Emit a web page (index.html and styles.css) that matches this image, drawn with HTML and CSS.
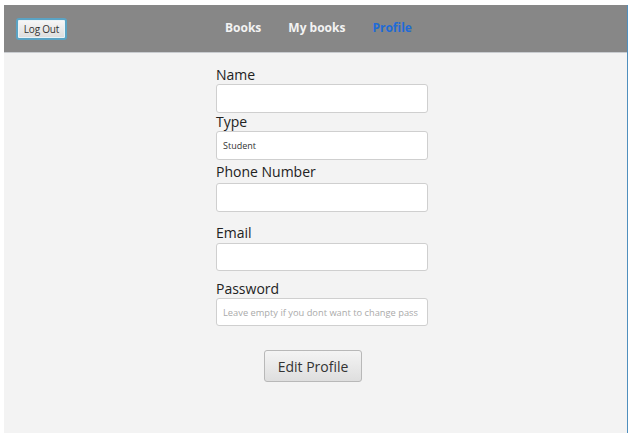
FILE: index.html
```html
<!DOCTYPE html>
<html>
<head>
<meta charset="utf-8">
<link rel="stylesheet" href="styles.css">
</head>
<body>
<div class="app">
  <header class="topbar">
    <button class="logout">Log Out</button>
    <nav class="nav">
      <span class="nav-item">Books</span>
      <span class="nav-item">My books</span>
      <span class="nav-item active">Profile</span>
    </nav>
  </header>
  <main class="content">
    <form class="form">
      <label class="label">Name</label>
      <div class="input"></div>
      <label class="label">Type</label>
      <div class="input"><span class="value">Student</span></div>
      <label class="label label-phone">Phone Number</label>
      <div class="input input-phone"></div>
      <label class="label label-email">Email</label>
      <div class="input input-email"></div>
      <label class="label label-pass">Password</label>
      <div class="input input-pass"><span class="placeholder">Leave empty if you dont want to change pass</span></div>
      <div class="actions"><button type="button" class="edit">Edit Profile</button></div>
    </form>
  </main>
</div>
</body>
</html>
```
FILE: styles.css
```css
html, body {
  margin: 0;
  padding: 0;
  background: #ffffff;
  font-family: "Open Sans", "DejaVu Sans", sans-serif;
}
.app {
  margin: 5px 0 0 4px;
  width: 623px;
  height: 428px;
  display: flex;
  flex-direction: column;
  background: #f3f3f3;
  border-right: 1px solid #4f8fbe;
}
.topbar {
  height: 47px;
  background: #878787;
  border-bottom: 1px solid #c9ccd0;
  display: flex;
  align-items: flex-start;
  box-sizing: content-box;
}
.logout {
  margin: 13px 0 0 12px;
  width: 51px;
  height: 22px;
  padding: 0;
  font-family: "Open Sans", sans-serif;
  font-size: 10px;
  letter-spacing: -0.2px;
  color: #333;
  background: linear-gradient(#f7f7f7, #dcdcdc);
  border: 2px solid #5aa3c4;
  border-radius: 3px;
  box-shadow: inset 0 0 0 1px #e9f3f7;
}
.nav {
  display: flex;
  gap: 27px;
  margin: 0 0 0 158px;
  padding-top: 14px;
  font-size: 12px;
  font-weight: 700;
  line-height: 17px;
}
.nav-item { color: #f3f3f3; }
.nav-item.active { color: #1f6bd6; }
.content {
  flex: 1;
  padding: 13px 0 0 212px;
}
.form {
  width: 212px;
  display: flex;
  flex-direction: column;
  margin: 0;
}
.label {
  font-size: 14px;
  line-height: 18px;
  color: #222;
}
.label-phone { margin-top: 3px; }
.label-email { margin-top: 12px; }
.label-pass { margin-top: 9px; }
.input-phone { margin-top: 2px; }
.input-email { margin-top: 1px; }
.input {
  height: 29px;
  box-sizing: border-box;
  background: #fff;
  border: 1px solid #cfcfcf;
  border-radius: 3px;
  display: flex;
  align-items: center;
  padding-left: 6px;
  font-size: 9px;
}
.input-email, .input-pass { height: 28px; }
.value { color: #333; }
.placeholder { color: #aaa; white-space: nowrap; font-size: 9.3px; }
.actions {
  display: flex;
  padding: 24px 0 0 48px;
}
.edit {
  width: 98px;
  height: 32px;
  padding: 0;
  font-family: "Open Sans", sans-serif;
  font-size: 14px;
  color: #333;
  background: linear-gradient(#f4f4f4, #dedede);
  border: 1px solid #b8b8b8;
  border-radius: 3px;
}
```
